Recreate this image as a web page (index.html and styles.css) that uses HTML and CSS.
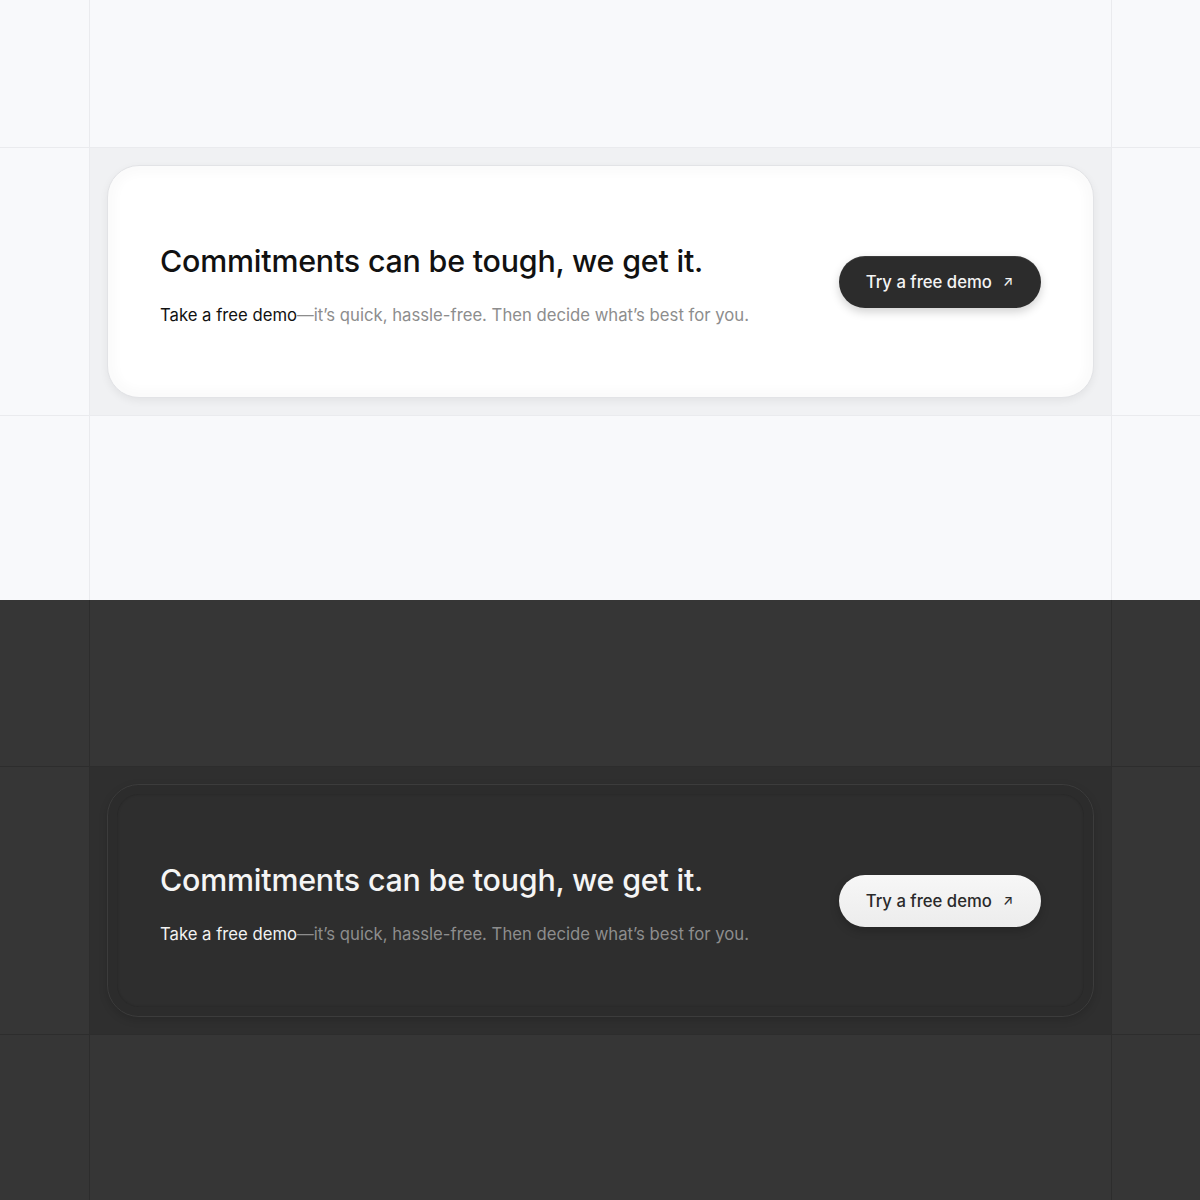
FILE: index.html
```html
<!DOCTYPE html>
<html lang="en">
<head>
  <meta charset="UTF-8" />
  <title>Free demo banner</title>
  <link rel="stylesheet" href="styles.css">
</head>
<body>

  <section class="theme light">
    <div class="row top"><div class="rail"></div></div>
    <div class="row band">
      <div class="rail">
        <div class="cta">
          <div class="cta-text">
            <h2>Commitments can be tough, we get it.</h2>
            <p><span class="lead">Take a free demo</span>—it’s quick, hassle-free. Then decide what’s best for you.</p>
          </div>
          <a class="demo-btn" href="#">Try a free demo <span class="arrow">↗</span></a>
        </div>
      </div>
    </div>
    <div class="row rest"><div class="rail"></div></div>
  </section>

  <section class="theme dark">
    <div class="row top"><div class="rail"></div></div>
    <div class="row band">
      <div class="rail">
        <div class="cta">
          <div class="cta-text">
            <h2>Commitments can be tough, we get it.</h2>
            <p><span class="lead">Take a free demo</span>—it’s quick, hassle-free. Then decide what’s best for you.</p>
          </div>
          <a class="demo-btn" href="#">Try a free demo <span class="arrow">↗</span></a>
        </div>
      </div>
    </div>
    <div class="row rest"><div class="rail"></div></div>
  </section>

</body>
</html>
```

FILE: styles.css
```css
body {
  margin: 0;
  font-family: Inter, "Noto Sans", sans-serif;
}
.theme {
  height: 600px;
  display: flex;
  flex-direction: column;
}
.row {
  display: flex;
  flex-shrink: 0;
}
.rail {
  flex: 1;
  margin: 0 88px 0 89px;
  border-left: 1px solid;
  border-right: 1px solid;
  border-color: inherit;
}
.top {
  height: 147px;
  border-bottom: 1px solid;
}
.dark .top {
  height: 166px;
}
.band {
  height: 267px;
  border-bottom: 1px solid;
}
.rest {
  flex: 1 1 auto;
}
.band .rail {
  padding: 17px;
  box-sizing: border-box;
}
.cta {
  height: 100%;
  box-sizing: border-box;
  border-radius: 32px;
  padding: 0 52px 0 52px;
  display: flex;
  align-items: center;
  justify-content: space-between;
}
.cta-text {
  margin-top: 5px;
}
.cta h2 {
  margin: 0;
  font-size: 30.4px;
  font-weight: 500;
  letter-spacing: -0.2px;
  line-height: 36px;
}
.cta p {
  margin: 25px 0 0;
  font-size: 16.7px;
  line-height: 22px;
  color: #8d8d8d;
}
.demo-btn {
  display: flex;
  align-items: center;
  gap: 11px;
  height: 52px;
  padding: 0 28px 0 27px;
  box-sizing: border-box;
  white-space: nowrap;
  border-radius: 26px;
  font-size: 16.7px;
  font-weight: 500;
  text-decoration: none;
}
.demo-btn .arrow {
  font-size: 13px;
  margin-top: -2px;
}

/* light */
.light {
  background: #f8f9fb;
  border-color: #eaebee;
}
.light .row {
  border-color: #eaebee;
}
.light .band .rail {
  background: #f0f1f3;
}
.light .cta {
  background: #fff;
  border: 1px solid #e2e3e6;
  box-shadow: 0 3px 8px rgba(0,0,0,0.06), inset 0 0 10px 8px rgba(0,0,0,0.018);
}
.light h2 {
  color: #111;
}
.light .lead {
  color: #111;
}
.light .demo-btn {
  background: #2c2c2c;
  color: #f4f4f4;
  box-shadow: 0 4px 10px rgba(0,0,0,0.18), inset 0 1px 0 rgba(255,255,255,0.08);
}

/* dark */
.dark {
  background: #363636;
  border-color: #2d2d2d;
}
.dark .row {
  border-color: #2d2d2d;
}
.dark .band .rail {
  background: #2f2f2f;
}
.dark .cta {
  background: #2e2e2e;
  border: 1px solid #3c3c3c;
  box-shadow: 0 3px 8px rgba(0,0,0,0.15), inset 0 0 0 9px #2c2c2c, inset 0 0 2px 10px rgba(0,0,0,0.12);
}
.dark h2 {
  color: #f5f5f5;
}
.dark .lead {
  color: #f2f2f2;
}
.dark .demo-btn {
  background: linear-gradient(#f7f7f7, #ececec);
  color: #2a2a2a;
  box-shadow: 0 4px 10px rgba(0,0,0,0.2);
}
```
